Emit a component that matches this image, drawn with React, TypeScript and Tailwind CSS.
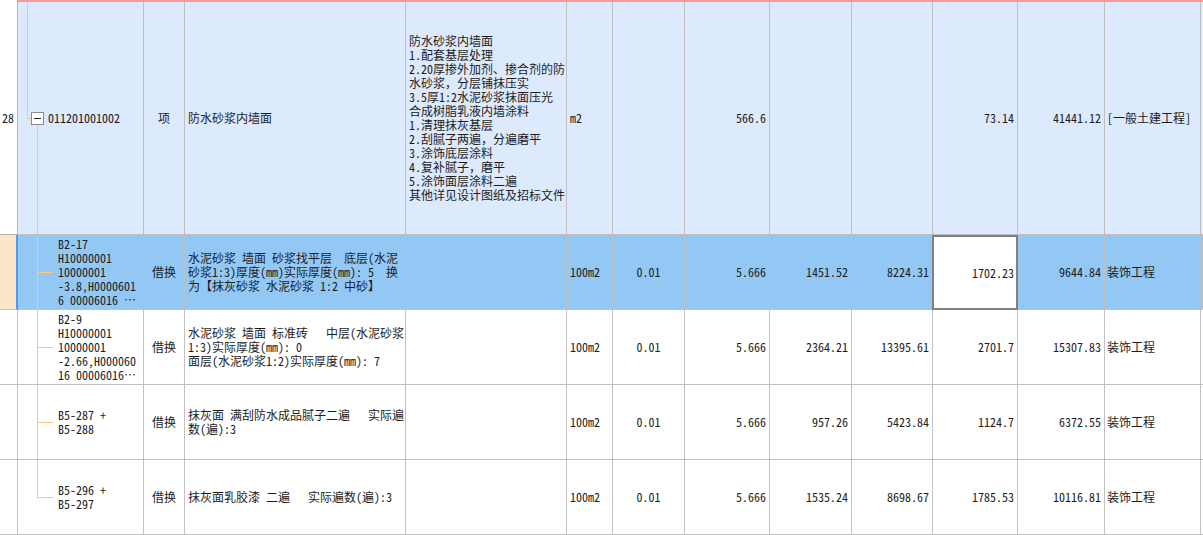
import clsx from "clsx"

type Child = {
  code: string[]
  text: string[]
  price: string
  cost: string
  fee: string
  total: string
  last?: boolean
}

const children: Child[] = [
  {
    code: ["B2-17", "H10000001", "10000001", "-3.8,H0000601", "6 00006016 …"],
    text: [
      "水泥砂浆 墙面 砂浆找平层  底层(水泥",
      "砂浆1:3)厚度(mm)实际厚度(mm): 5  换",
      "为【抹灰砂浆 水泥砂浆 1:2 中砂】",
    ],
    price: "1451.52",
    cost: "8224.31",
    fee: "1702.23",
    total: "9644.84",
  },
  {
    code: ["B2-9", "H10000001", "10000001", "-2.66,H000060", "16 00006016…"],
    text: [
      "水泥砂浆 墙面 标准砖   中层(水泥砂浆",
      "1:3)实际厚度(mm): 0",
      "面层(水泥砂浆1:2)实际厚度(mm): 7",
    ],
    price: "2364.21",
    cost: "13395.61",
    fee: "2701.7",
    total: "15307.83",
  },
  {
    code: ["B5-287 +", "B5-288"],
    text: ["抹灰面 满刮防水成品腻子二遍   实际遍", "数(遍):3"],
    price: "957.26",
    cost: "5423.84",
    fee: "1124.7",
    total: "6372.55",
  },
  {
    code: ["B5-296 +", "B5-297"],
    text: ["抹灰面乳胶漆 二遍   实际遍数(遍):3"],
    price: "1535.24",
    cost: "8698.67",
    fee: "1785.53",
    total: "10116.81",
    last: true,
  },
]

const desc = [
  "防水砂浆内墙面",
  "1.配套基层处理",
  "2.20厚掺外加剂、掺合剂的防",
  "水砂浆，分层铺抹压实",
  "3.5厚1:2水泥砂浆抹面压光",
  "合成树脂乳液内墙涂料",
  "1.清理抹灰基层",
  "2.刮腻子两遍，分遍磨平",
  "3.涂饰底层涂料",
  "4.复补腻子，磨平",
  "5.涂饰面层涂料二遍",
  "其他详见设计图纸及招标文件",
]

const cell = "border-r border-b border-[#c0c0c0] flex items-center overflow-hidden"

function Lines({ lines }: { lines: string[] }) {
  return (
    <div>
      {lines.map((l, i) => (
        <div key={i} className="whitespace-pre">{l}</div>
      ))}
    </div>
  )
}

function ChildRow({ row, selected }: { row: Child; selected: boolean }) {
  const bg = selected ? "bg-[#93c8f5]" : "bg-white"
  return (
    <>
      <div
        className={clsx(
          "border-b border-[#c0c0c0]",
          selected ? "bg-[#fde6c8] border-r-2 border-r-[#4a9bf5]" : "bg-white border-r"
        )}
      />
      <div className={clsx(cell, bg, "relative pl-[40px]")}>
        <span
          className={clsx(
            "absolute left-[19px] top-0 w-px bg-[#f9c97d]",
            row.last ? "h-[37px]" : "h-full"
          )}
        />
        <span className="absolute left-[19px] top-[37px] w-[16px] h-px bg-[#f9c97d]" />
        <Lines lines={row.code} />
      </div>
      <div className={clsx(cell, bg, "justify-center")}>借换</div>
      <div className={clsx(cell, bg, "pl-[3px]")}>
        <Lines lines={row.text} />
      </div>
      <div className={clsx(cell, bg)} />
      <div className={clsx(cell, bg, "pl-[3px]")}>100m2</div>
      <div className={clsx(cell, bg, "justify-center")}>0.01</div>
      <div className={clsx(cell, bg, "justify-end pr-[3px]")}>5.666</div>
      <div className={clsx(cell, bg, "justify-end pr-[3px]")}>{row.price}</div>
      <div className={clsx(cell, bg, "justify-end pr-[3px]")}>{row.cost}</div>
      {selected ? (
        <div className="flex items-center justify-end pr-[2px] bg-white border-2 border-[#808080] -ml-px">
          {row.fee}
        </div>
      ) : (
        <div className={clsx(cell, bg, "justify-end pr-[3px]")}>{row.fee}</div>
      )}
      <div className={clsx(cell, bg, "justify-end pr-[3px]")}>{row.total}</div>
      <div className={clsx(cell, bg, "pl-[2px]")}>装饰工程</div>
      <div className={clsx("border-b border-[#c0c0c0]", bg)} />
    </>
  )
}

export default function App() {
  const blue = "bg-[#dde9fc]"
  return (
    <div className="w-[1203px] h-[535px] overflow-hidden bg-white text-[12px] leading-[14px] text-[#1c1c1c] font-['Noto_Sans_Mono_CJK_SC','Noto_Sans_CJK_SC',sans-serif]">
      <div className="grid grid-cols-[18px_126px_41px_221px_161px_46px_72px_85px_82px_81px_85px_87px_96px_1fr] grid-rows-[2px_233px_75px_75px_75px_75px]">
        {/* top marker strip */}
        <div className="bg-white border-r border-[#b4b4b4]" />
        <div className="col-span-13 bg-[#ff9595]" />

        {/* parent row */}
        <div className="bg-white border-r border-b border-[#b4b4b4] flex items-center pl-[2px]">28</div>
        <div className={clsx(cell, blue, "relative pl-[30px]")}>
          <span className="absolute left-[9px] top-0 w-px h-[117px] bg-[#f9c97d]" />
          <span className="absolute left-[9px] top-[116px] w-[4px] h-px bg-[#f9c97d]" />
          <span className="absolute left-[13px] top-[110px] w-[13px] h-[13px] bg-white border border-[#8a8a8a] flex items-center justify-center">
            <span className="w-[7px] h-px bg-[#222]" />
          </span>
          <span className="absolute left-[19px] top-[123px] bottom-0 w-px bg-[#f9c97d]" />
          011201001002
        </div>
        <div className={clsx(cell, blue, "justify-center")}>项</div>
        <div className={clsx(cell, blue, "pl-[3px]")}>防水砂浆内墙面</div>
        <div className={clsx(cell, blue, "pl-[3px]")}>
          <Lines lines={desc} />
        </div>
        <div className={clsx(cell, blue, "pl-[3px]")}>m2</div>
        <div className={clsx(cell, blue)} />
        <div className={clsx(cell, blue, "justify-end pr-[3px]")}>566.6</div>
        <div className={clsx(cell, blue)} />
        <div className={clsx(cell, blue)} />
        <div className={clsx(cell, blue, "justify-end pr-[3px]")}>73.14</div>
        <div className={clsx(cell, blue, "justify-end pr-[3px]")}>41441.12</div>
        <div className={clsx(cell, blue, "pl-[2px]")}>[一般土建工程]</div>
        <div className={clsx("border-b border-[#c0c0c0]", blue)} />

        {children.map((row, i) => (
          <ChildRow key={i} row={row} selected={i === 0} />
        ))}
      </div>
    </div>
  )
}
